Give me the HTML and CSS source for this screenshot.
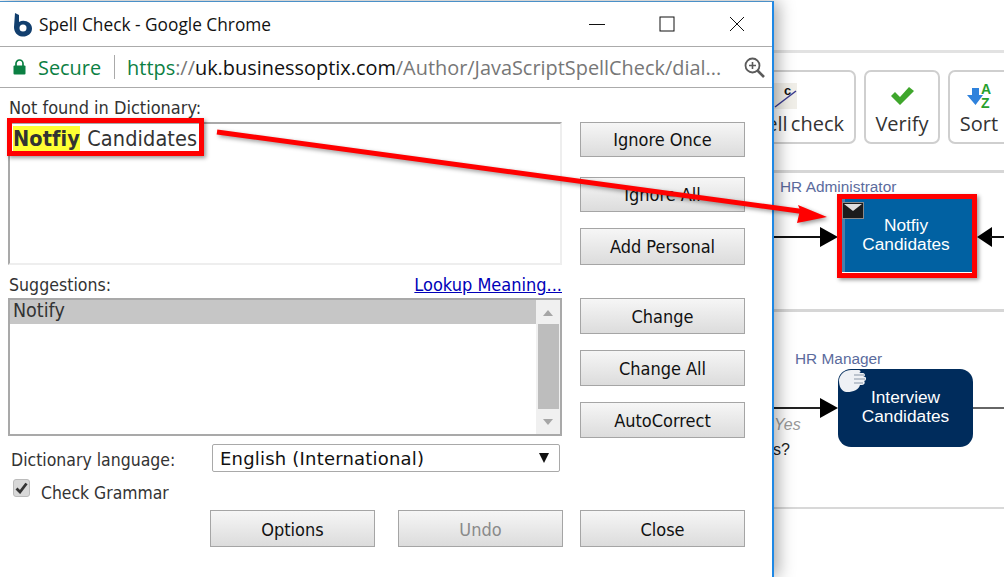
FILE: index.html
```html
<!DOCTYPE html>
<html lang="en">
<head>
<meta charset="utf-8">
<title>Spell Check</title>
<link rel="stylesheet" href="styles.css">
</head>
<body>
<div class="app">
  <div class="app-top"></div>
  <div class="toolbar">
    <div class="tool tool-spell">
      <svg class="tool-icon" width="24" height="28" viewBox="0 0 24 28"><rect x="0" y="0" width="24" height="26" fill="#f1efe9"/><text x="11" y="12" class="spell-c">c</text><path d="M2 24 L23 8" stroke="#3a3a90" stroke-width="1.5" fill="none"/></svg>
      <span>Spell check</span>
    </div>
    <div class="tool tool-verify">
      <svg class="tool-icon" width="26" height="28" viewBox="0 0 26 28"><path d="M2 14 L6 10 L11 15 L20 5 L25 9 L11 23 Z" fill="#3fa62c"/></svg>
      <span>Verify</span>
    </div>
    <div class="tool tool-sort">
      <svg class="tool-icon" width="28" height="28" viewBox="0 0 28 28"><path d="M7 6 H14 V13 H18 L10.5 23 L2 13 H7 Z" fill="#2f82dc"/><text x="16" y="12" class="az">A</text><text x="16" y="26" class="az">Z</text></svg>
      <span>Sort</span>
    </div>
  </div>
  <div class="lane lane-one">
    <span class="role role-admin">HR Administrator</span>
    <div class="line line-a"></div>
    <div class="tri tri-a"></div>
    <div class="node node-notify">
      <svg class="env" width="22" height="17" viewBox="0 0 22 17"><rect x="0.5" y="0.5" width="21" height="16" fill="#1c1c1c" stroke="#8a8a8a"/><path d="M2 2 H20 L11 9 Z" fill="#ddd"/></svg>
      <span>Notfiy<br>Candidates</span>
    </div>
    <div class="tri-left"></div>
    <div class="line line-b"></div>
  </div>
  <div class="lane lane-two">
    <span class="role role-mgr">HR Manager</span>
    <div class="line line-c"></div>
    <div class="tri tri-c"></div>
    <div class="node node-interview">
      <svg class="hand" width="28" height="24" viewBox="0 0 28 24"><path d="M1 11 C2 5 7 1 13 1 H21 C23 1 23 4 21 4 H25 C27.500 4 27.500 8 25 8 H27 C28.500 8 28.500 12 26 12 C27.500 13 26.500 16 24 16 H22 C21 21 14 23.500 8 23 C3 22 1 17 1 11 Z" fill="#eef1f5"/><path d="M16 6 H26 M16 10 H27 M16 14 H25" stroke="#8a97a8" stroke-width="1.200"/></svg>
      <span>Interview<br>Candidates</span>
    </div>
    <div class="line line-d"></div>
    <span class="yes">Yes</span>
    <span class="ques">s?</span>
  </div>
  <div class="lane lane-three"></div>
</div>

<div class="window">
  <div class="titlebar">
    <svg class="favicon" width="20" height="25" viewBox="0 0 20 25"><path d="M2 1 L6 3 V10 C11 7 19 10 19 16.500 C19 22 14 25 9 24.500 C4 24 1 20 1 15 Z" fill="#123f6e"/><circle cx="10" cy="16" r="3.500" fill="#fff"/></svg>
    <span class="title">Spell Check - Google Chrome</span>
    <div class="win-controls">
      <svg width="16" height="16" viewBox="0 0 16 16"><path d="M0 8.500 H16" stroke="#111" stroke-width="1"/></svg>
      <svg width="16" height="16" viewBox="0 0 16 16"><rect x="1" y="1" width="14" height="14" fill="none" stroke="#111" stroke-width="1"/></svg>
      <svg width="16" height="16" viewBox="0 0 16 16"><path d="M1 1 L15 15 M15 1 L1 15" stroke="#111" stroke-width="1"/></svg>
    </div>
  </div>
  <div class="addressbar">
    <svg class="lock" width="13" height="16" viewBox="0 0 13 16"><path d="M3 7 V4.500 A3.500 3.500 0 0 1 10 4.500 V7" fill="none" stroke="#0b8043" stroke-width="1.700"/><rect x="0.500" y="6.500" width="12" height="9" rx="1" fill="#0b8043"/></svg>
    <span class="secure">Secure</span>
    <span class="addr-sep"></span>
    <span class="url"><span class="url-scheme">https</span><span class="url-dim">://</span>uk.businessoptix.com<span class="url-dim">/Author/JavaScriptSpellCheck/dial...</span></span>
    <svg class="zoom-icon" width="21" height="21" viewBox="0 0 21 21"><circle cx="8.500" cy="8.500" r="7" fill="none" stroke="#5a5a5a" stroke-width="1.800"/><path d="M5 8.500 H12 M8.500 5 V12" stroke="#5a5a5a" stroke-width="1.600"/><path d="M13.500 13.500 L20 20" stroke="#5a5a5a" stroke-width="2.600"/></svg>
  </div>
  <div class="dialog">
    <div class="dialog-main">
      <div class="left">
        <div class="label label-first">Not found in Dictionary:</div>
        <div class="textbox"><b class="hl">Notfiy</b> Candidates</div>
        <div class="sugg-head"><span>Suggestions:</span><a class="lookup" href="#">Lookup Meaning...</a></div>
        <div class="listbox">
          <div class="list-items"><div class="list-sel">Notify</div></div>
          <div class="scroll">
            <div class="arrow-up"></div>
            <div class="thumb"></div>
            <div class="arrow-down"></div>
          </div>
        </div>
        <div class="lang-row">
          <span class="lang-label">Dictionary language:</span>
          <div class="select"><span>English (International)</span><span class="sel-arrow"></span></div>
        </div>
        <div class="check-row">
          <span class="checkbox"><svg width="13" height="12" viewBox="0 0 13 12"><path d="M1.500 6.500 L5 10 L11.500 1.500" fill="none" stroke="#333" stroke-width="2.800"/></svg></span>
          <span class="check-label">Check Grammar</span>
        </div>
      </div>
      <div class="right">
        <div class="btn btn-once">Ignore Once</div>
        <div class="btn btn-all">Ignore All</div>
        <div class="btn btn-add">Add Personal</div>
        <div class="btn btn-change">Change</div>
        <div class="btn btn-next">Change All</div>
        <div class="btn btn-next">AutoCorrect</div>
      </div>
    </div>
    <div class="bottom-row">
      <div class="btn btn-bottom">Options</div>
      <div class="btn btn-bottom btn-disabled">Undo</div>
      <div class="btn btn-bottom">Close</div>
    </div>
  </div>
</div>

<div class="call-box call-text"></div>
<div class="call-box call-node"></div>
<svg class="call-arrow" width="1004" height="577" viewBox="0 0 1004 577">
  <path d="M217 132 L806 212" stroke="#f00" stroke-width="5" fill="none"/>
  <path d="M827 217 L798 205 L800 210 L797 223 Z" fill="#f00"/>
</svg>
</body>
</html>
```
FILE: styles.css
```css
* { box-sizing: border-box; }
html, body { margin: 0; padding: 0; }
body {
  position: relative;
  width: 1004px;
  height: 577px;
  overflow: hidden;
  background: #fff;
  font-family: "DejaVu Sans Condensed", "DejaVu Sans", sans-serif;
}
.app {
  position: absolute;
  inset: 0;
  display: flex;
  flex-direction: column;
  background: #fff;
}
.app-top { height: 53px; border-bottom: 3px solid #e2e2e2; flex: none; }
.toolbar {
  height: 117px;
  flex: none;
  display: flex;
  gap: 8px;
  padding: 17px 0 0 758px;
}
.tool {
  height: 74px;
  border: 2px solid #cfcfcf;
  border-radius: 7px;
  display: flex;
  flex-direction: column;
  align-items: center;
  font: 20px "Open Sans", sans-serif;
  color: #333;
  padding-top: 10px;
  flex: none;
  position: relative;
}
.tool span { position: absolute; top: 38px; line-height: 28px; white-space: nowrap; }
.tool-spell { width: 98px; }
.tool-spell span { right: 10px; word-spacing: -2px; }
.tool-spell .tool-icon { position: absolute; left: 13px; top: 11px; }
.tool-verify { width: 76px; }
.tool-sort { width: 62px; }
.spell-c { font: bold 13px "Liberation Sans", sans-serif; fill: #111; }
.az { font: bold 14px "Liberation Sans", sans-serif; fill: #27a02d; }
.lane { position: relative; flex: none; border-top: 3px solid #d6d6d6; }
.lane-one { height: 139px; }
.lane-two { height: 198px; border-top-width: 3px; }
.lane-three { flex: 1; border-top: 2px solid #d8d8d8; }
.role { position: absolute; font: 15.400px "Liberation Sans", sans-serif; color: #5b6b9d; white-space: nowrap; }
.role-admin { left: 780px; top: 5px; }
.role-mgr { left: 795px; top: 38px; }
.line { position: absolute; height: 2px; background: #111; }
.line-a { left: 773px; width: 50px; top: 63px; }
.line-b { left: 990px; width: 14px; top: 63px; }
.line-c { left: 773px; width: 50px; top: 95px; background: #222; }
.line-d { left: 973px; width: 31px; top: 95px; background: #666; }
.tri { position: absolute; width: 0; height: 0; border-left: 18px solid #000; border-top: 10px solid transparent; border-bottom: 10px solid transparent; left: 820px; }
.tri-a { top: 54px; }
.tri-c { top: 86px; }
.tri-left { position: absolute; left: 977px; top: 54px; width: 0; height: 0; border-right: 15px solid #000; border-top: 10px solid transparent; border-bottom: 10px solid transparent; }
.node {
  position: absolute;
  color: #fff;
  font: 17.300px/19px "Liberation Sans", sans-serif;
  text-align: center;
  display: flex;
  align-items: center;
  justify-content: center;
  padding-bottom: 2px;
}
.node-notify { left: 842px; top: 26px; width: 131px; height: 73px; background: #0161a2; border-left: 3px solid #4a7faa; padding-right: 6px; }
.node-interview { left: 838px; top: 57px; width: 135px; height: 78px; background: #002c5c; border-radius: 13px; }
.env { position: absolute; left: -3px; top: 3px; }
.hand { position: absolute; left: 0; top: 0; }
.yes { position: absolute; left: 774px; top: 104px; font: italic 16px "Liberation Sans", sans-serif; color: #999; }
.ques { position: absolute; left: 773px; top: 129px; font: 16px "Liberation Sans", sans-serif; color: #222; }

.window {
  position: absolute;
  left: 0;
  top: 1px;
  width: 774px;
  height: 576px;
  background: #fff;
  border-top: 1px solid #4a90c8;
  border-right: 2px solid #1e88e5;
  box-shadow: 4px 0 16px rgba(0,0,0,.35);
  display: flex;
  flex-direction: column;
}
.titlebar {
  height: 45px;
  flex: none;
  display: flex;
  align-items: center;
  padding-left: 13px;
  border-bottom: 1px solid #ababab;
}
.favicon { margin-right: 6px; flex: none; }
.title { font: 17.300px "Open Sans", sans-serif; color: #111; }
.win-controls {
  margin-left: auto;
  display: flex;
  gap: 54px;
  padding-right: 27px;
}
.addressbar {
  height: 41px;
  flex: none;
  display: flex;
  align-items: center;
  padding-left: 13px;
  border-bottom: 1px solid #ababab;
  font: 19.900px "Open Sans", sans-serif;
  white-space: nowrap;
}
.secure { color: #0b8043; margin-left: 12px; }
.addr-sep { width: 1px; height: 24px; background: #aaa; margin: 0 12px 0 13px; }
.url { color: #111; }
.url-scheme { color: #0b8043; }
.url-dim { color: #777; }
.zoom-icon { margin-left: auto; margin-right: 7px; }
.dialog { flex: 1; padding: 0 27px 0 8px; font-size: 18px; color: #333; }
.dialog-main { display: flex; gap: 18px; }
.left { width: 554px; flex: none; }
.right { width: 165px; flex: none; padding-top: 34px; display: flex; flex-direction: column; }
.label { height: 34px; padding: 9px 0 0 1px; line-height: 22px; font-size: 18px; }
.textbox {
  height: 143px;
  border: 2px solid #a9a9a9;
  border-right-color: #eee;
  border-bottom-color: #eee;
  padding: 1px 3px;
  font-size: 21.500px;
  line-height: 27px;
  word-spacing: 1px;
  letter-spacing: .1px;
}
.hl { background: #ffff33; }
.sugg-head { height: 33px; display: flex; justify-content: space-between; align-items: center; font-size: 17.600px; padding: 6px 0 0 1px; }
.lookup { color: #0000b8; text-decoration: underline; font-size: 18px; }
.listbox { height: 138px; border: 2px solid #a9a9a9; display: flex; }
.list-items { flex: 1; }
.list-sel { height: 24px; background: #c6c6c6; padding-left: 3px; line-height: 22px; font-size: 19.500px; }
.scroll { width: 24px; background: #f0f0f0; display: flex; flex-direction: column; align-items: center; }
.thumb { width: 21px; height: 85px; background: #bdbdbd; }
.arrow-up, .arrow-down { width: 0; height: 0; flex: none; }
.arrow-up { border-left: 5px solid transparent; border-right: 5px solid transparent; border-bottom: 6px solid #a6a6a6; margin: 10px 0 8px; }
.arrow-down { border-left: 5px solid transparent; border-right: 5px solid transparent; border-top: 6px solid #a6a6a6; margin: 10px 0 0; }
.lang-row { display: flex; align-items: center; padding: 8px 0 0 3px; }
.lang-label { width: 201px; font-size: 17.500px; padding-top: 3px; white-space: nowrap; }
.select {
  width: 348px;
  height: 28px;
  border: 1px solid #a9a9a9;
  border-radius: 2px;
  display: flex;
  align-items: center;
  justify-content: space-between;
  padding: 0 10px 0 7px;
  font: 18px "DejaVu Sans", sans-serif;
  letter-spacing: .2px;
  color: #111;
}
.sel-arrow { width: 0; height: 0; border-left: 5px solid transparent; border-right: 5px solid transparent; border-top: 10px solid #111; }
.check-row { display: flex; align-items: center; padding: 11px 0 0 5px; }
.checkbox {
  width: 17px; height: 18px;
  background: #d8d8d8;
  border: 1px solid #bbb;
  border-radius: 3px;
  display: flex; align-items: center; justify-content: center;
  margin: -10px 11px 0 0;
}
.check-label { font-size: 17.400px; }
.btn {
  height: 36px;
  flex: none;
  border: 1px solid #a5a5a5;
  background: linear-gradient(#f6f6f6, #dcdcdc);
  color: #111;
  display: flex;
  align-items: center;
  justify-content: center;
  font-size: 18px;
}
.btn-once { height: 35px; }
.btn-all { height: 35px; margin-top: 20px; }
.btn-add { height: 37px; margin-top: 16px; }
.btn-change { margin-top: 33px; }
.btn-next { margin-top: 16px; }
.bottom-row { display: flex; margin-top: 7px; padding-left: 202px; }
.btn-bottom { width: 165px; height: 37px; margin-right: 23px; padding-top: 1px; }
.btn-bottom:last-child { margin: 0 0 0 -6px; }
.btn-disabled { color: #8a8a8a; }

.call-box {
  position: absolute;
  border: 5px solid #f00;
  box-shadow: 2px 2px 4px rgba(0,0,0,.4);
}
.call-text { left: 7px; top: 118px; width: 197px; height: 38px; }
.call-node { left: 837px; top: 194px; width: 140px; height: 84px; }
.call-arrow { position: absolute; left: 0; top: 0; filter: drop-shadow(2px 2px 2px rgba(0,0,0,.4)); }
```
